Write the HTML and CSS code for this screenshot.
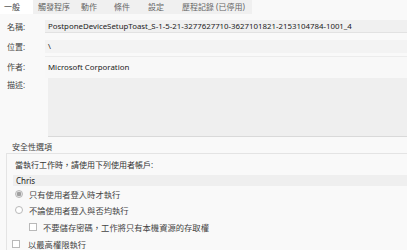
FILE: index.html
```html
<!DOCTYPE html>
<html lang="zh-Hant">
<head>
  <meta charset="UTF-8" />
  <title>工作內容</title>
  <link rel="stylesheet" href="styles.css">
</head>
<body>

  <!-- Pestañas -->
  <div class="tabs">
    <div class="tab active">一般</div>
    <div class="tab-strip">
      <span class="tab">觸發程序</span>
      <span class="tab">動作</span>
      <span class="tab">條件</span>
      <span class="tab">設定</span>
      <span class="tab">歷程記錄 (已停用)</span>
    </div>
  </div>

  <!-- Datos generales -->
  <div class="row row-name">
    <div class="label">名稱:</div>
    <div class="field">PostponeDeviceSetupToast_S-1-5-21-3277627710-3627101821-2153104784-1001_4</div>
  </div>
  <div class="row row-location">
    <div class="label">位置:</div>
    <div class="field">\</div>
  </div>
  <div class="row row-author">
    <div class="label">作者:</div>
    <div class="field field-light">Microsoft Corporation</div>
  </div>
  <div class="row row-desc">
    <div class="label">描述:</div>
    <div class="field field-area"></div>
  </div>

  <!-- Opciones de seguridad -->
  <div class="section-title">安全性選項</div>
  <div class="group">
    <div class="group-text">當執行工作時，請使用下列使用者帳戶:</div>
    <div class="user-field">Chris</div>

    <div class="option">
      <span class="radio checked"></span>
      <span>只有使用者登入時才執行</span>
    </div>
    <div class="option">
      <span class="radio"></span>
      <span>不論使用者登入與否均執行</span>
    </div>
    <div class="option sub">
      <span class="check"></span>
      <span>不要儲存密碼，工作將只有本機資源的存取權</span>
    </div>
    <div class="option outer">
      <span class="check"></span>
      <span>以最高權限執行</span>
    </div>
  </div>

</body>
</html>
```

FILE: styles.css
```css
body {
  margin: 0;
  background: #f9f9f9;
  font-family: 'Noto Sans', 'Noto Sans CJK TC', sans-serif;
  font-size: 8px;
  color: #333;
  overflow: hidden;
}

/* Pestañas */
.tabs {
  display: flex;
  height: 14px;
  line-height: 14px;
}

.tab.active {
  width: 33px;
  padding-left: 4px;
  box-sizing: border-box;
  background: #fff;
  color: #444;
}

.tab-strip {
  display: flex;
  width: 219px;
  background: #f0f0f0;
  color: #666;
}

.tab-strip .tab {
  padding-left: 5px;
}

.tab-strip .tab:nth-child(1) { width: 38px; }
.tab-strip .tab:nth-child(2) { width: 28px; }
.tab-strip .tab:nth-child(3) { width: 29px; }
.tab-strip .tab:nth-child(4) { width: 29px; }

/* Filas */
.row {
  display: grid;
  grid-template-columns: 45px 1fr;
}

.label {
  padding-left: 7px;
  color: #444;
}

.field {
  padding-left: 3px;
  background: #f0f0f0;
  color: #222;
  font-size: 7.85px;
  white-space: nowrap;
  overflow: hidden;
}

.row-name {
  margin-top: 6px;
  height: 13px;
  line-height: 13px;
}

.row-name .field {
  border-bottom: 1px solid #e2e2e2;
}

.row-location {
  margin-top: 7px;
  height: 13px;
  line-height: 13px;
}

.row-location .field {
  background: #f3f3f3;
}

.row-author {
  margin-top: 3px;
  height: 22px;
  line-height: 22px;
}

.field-light {
  background: #f8f8f8;
  border-top: 1px solid #ececec;
  line-height: 21px;
}

.row-desc {
  height: 59px;
}

.row-desc .label {
  line-height: 13px;
}

.field-area {
  margin-left: 3px;
  background: #efefef;
  border-bottom: 1px solid #d9d9d9;
}

/* Opciones de seguridad */
.section-title {
  margin-top: 3px;
  padding-left: 12px;
  height: 13px;
  line-height: 13px;
  color: #444;
}

.group {
  margin-left: 6px;
  border-top: 1px solid #e4e4e4;
  border-left: 1px solid #e4e4e4;
  padding-top: 5px;
}

.group-text {
  padding-left: 8px;
  line-height: 12px;
  color: #333;
}

.user-field {
  margin-top: 4px;
  margin-left: 6px;
  padding-left: 3px;
  height: 11px;
  line-height: 11px;
  background: #efefef;
  color: #222;
}

.option {
  display: flex;
  align-items: center;
  gap: 4px;
  height: 16px;
  padding-left: 8px;
  color: #444;
  font-size: 8.3px;
}

.option:first-of-type {
  margin-top: 5px;
}

.option.sub {
  padding-left: 22px;
  height: 17px;
}

.option.outer {
  padding-left: 5px;
  height: 18px;
  gap: 6px;
}

.radio {
  width: 8px;
  height: 8px;
  border: 1px solid #b9b9b9;
  border-radius: 50%;
  background: #fff;
  box-sizing: border-box;
  margin-right: 2px;
}

.radio.checked {
  background: radial-gradient(circle, #a0a0a0 0 2px, #e4e4e4 2.5px);
}

.check {
  width: 8px;
  height: 8px;
  border: 1px solid #b9b9b9;
  background: #fff;
  box-sizing: border-box;
  margin-right: 2px;
}
```
